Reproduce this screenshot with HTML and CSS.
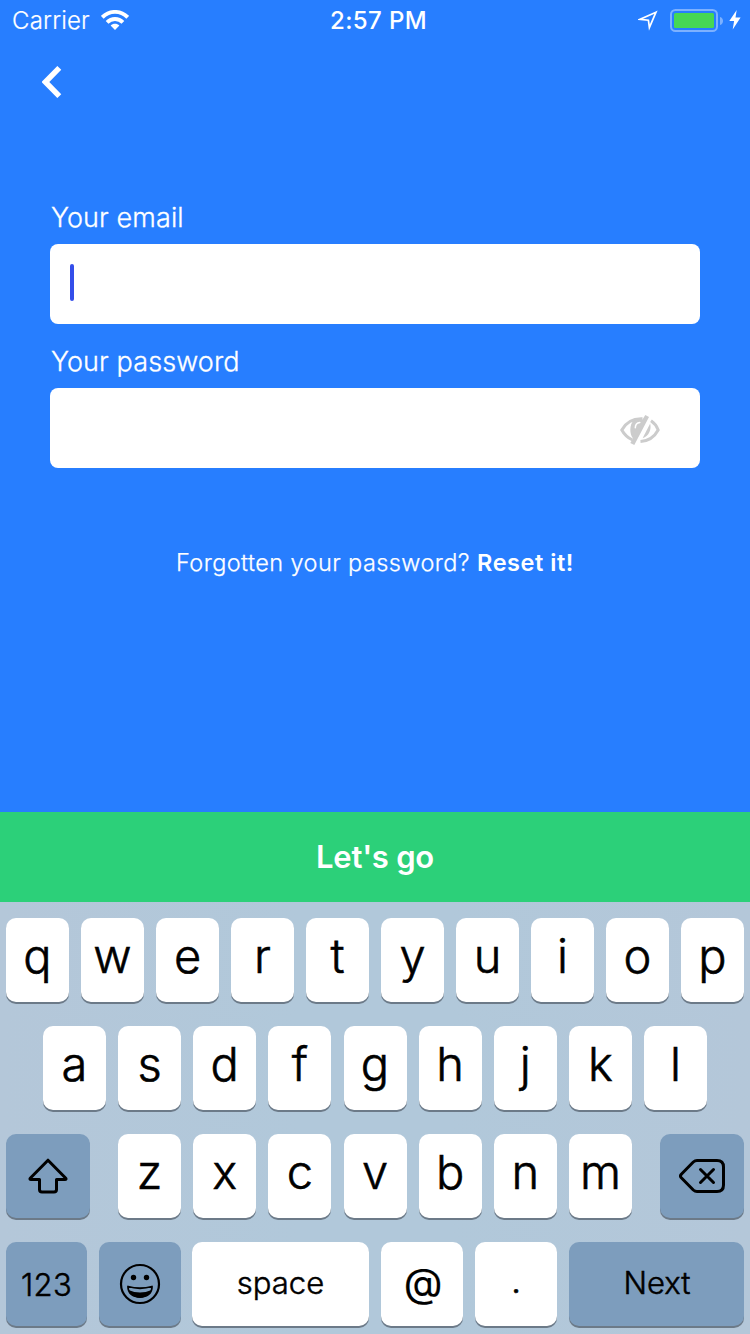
FILE: index.html
```html
<!DOCTYPE html>
<html lang="en">
<head>
<meta charset="utf-8">
<title>Sign in</title>
<link rel="stylesheet" href="styles.css">
</head>
<body>
<main class="screen">
  <header class="status">
    <div class="status-left">
      <span class="carrier">Carrier</span>
      <svg class="wifi" width="28" height="20" viewBox="0 0 28 20"><g fill="none" stroke="#fff" stroke-width="3.9"><path d="M1.3 7.3C8.6 .1 19.4 .1 26.7 7.3"/><path d="M6.1 12.3C10.5 7.9 17.5 7.9 21.9 12.3"/></g><path fill="#fff" d="M9.6 15.5C12 13.2 16 13.2 18.4 15.5L14 20Z"/></svg>
    </div>
    <span class="clock">2:57 PM</span>
    <div class="status-right">
      <svg class="location" width="20" height="21" viewBox="0 0 20 21"><path fill="none" stroke="#fff" stroke-width="1.7" d="M18 2.200L2.200 9.300L10.400 10.200L11.400 17.600Z"/></svg>
      <svg class="battery" width="53" height="24" viewBox="0 0 53 24"><rect x="1" y="1" width="46" height="21" rx="4.5" fill="none" stroke="#fff" stroke-opacity=".4" stroke-width="2"/><rect x="4" y="4" width="40" height="15" rx="1.5" fill="#46d754"/><path fill="#fff" fill-opacity=".4" d="M50 8C54 9 54 15 50 16Z"/></svg>
      <svg class="bolt" width="12" height="20" viewBox="0 0 12 20"><path fill="#fff" d="M7.7 0L.3 11H5.1L3.7 19.5L11.6 7.6H6.5Z"/></svg>
    </div>
  </header>
  <nav class="nav">
    <svg class="back" width="20" height="32" viewBox="0 0 20 32"><path fill="none" stroke="#fff" stroke-width="5.500" d="M17.300 1.900L3.400 16L17.300 30.100"/></svg>
  </nav>
  <form class="form">
    <label class="label">Your email</label>
    <div class="field"><span class="caret"></span></div>
    <label class="label">Your password</label>
    <div class="field field-password">
      <svg class="eye" width="40" height="32" viewBox="0 0 40 32"><g fill="none" stroke="#ccc" stroke-width="3"><path d="M12.5 26C7.800 23.900 4 20 1.800 16C6 8.500 13 4.400 22.500 4.800"/><path d="M31 6.800C34.300 9 36.700 12.100 38.200 16C34.500 22.800 29 27 20.500 27.500"/></g><path fill="#ccc" d="M25.300 1L29 3L14.300 31L10.300 29L13 24.500C9.500 20 9.300 11 13.500 6.500L22.500 5.500Z"/><path fill="none" stroke="#fff" stroke-width="1.500" stroke-linecap="round" d="M15.300 13.800C15.400 10.700 17.400 8.900 19.800 8.600"/><path fill="#ccc" d="M30.200 9.500C31.700 16 28.500 22.300 22.600 24.300Z"/></svg>
    </div>
  </form>
  <p class="forgot">Forgotten your password? <strong class="reset">Reset it!</strong></p>
  <div class="go">Let's go</div>
  <section class="keyboard">
    <div class="row">
      <span class="key">q</span><span class="key">w</span><span class="key">e</span><span class="key">r</span><span class="key">t</span><span class="key">y</span><span class="key">u</span><span class="key">i</span><span class="key">o</span><span class="key">p</span>
    </div>
    <div class="row row-home">
      <span class="key">a</span><span class="key">s</span><span class="key">d</span><span class="key">f</span><span class="key">g</span><span class="key">h</span><span class="key">j</span><span class="key">k</span><span class="key">l</span>
    </div>
    <div class="row">
      <span class="key dark shift"><svg width="40" height="36" viewBox="0 0 40 36"><path fill="none" stroke="#000" stroke-width="3" stroke-linejoin="round" d="M20 2.200L37.800 20.200Q38.600 21.500 37 21.500H28.500V31.500Q28.500 34 26 34H14Q11.500 34 11.500 31.500V21.500H3Q1.400 21.500 2.200 20.200Z"/></svg></span>
      <div class="letters"><span class="key">z</span><span class="key">x</span><span class="key">c</span><span class="key">v</span><span class="key">b</span><span class="key">n</span><span class="key">m</span></div>
      <span class="key dark shift"><svg width="46" height="34" viewBox="0 0 46 34"><path fill="none" stroke="#000" stroke-width="3" stroke-linejoin="round" d="M18 1.500H38Q44.500 1.500 44.500 8V26Q44.500 32.500 38 32.500H18Q16 32.500 14.300 31L2.300 18.800Q.7 17 2.300 15.200L14.300 3Q16 1.500 18 1.500Z"/><path stroke="#000" stroke-width="3" stroke-linecap="round" d="M21.500 10.500L34.500 23.500M34.500 10.500L21.500 23.500"/></svg></span>
    </div>
    <div class="row row-bottom">
      <span class="key dark small numbers">123</span>
      <span class="key dark emoji"><svg width="42" height="42" viewBox="0 0 42 42"><circle cx="21" cy="21" r="19" fill="none" stroke="#000" stroke-width="2.200"/><circle cx="14.500" cy="14.500" r="2.700"/><circle cx="27.500" cy="14.500" r="2.700"/><path fill="none" stroke="#000" stroke-width="1.800" stroke-linejoin="round" d="M9 23.500Q21 27 33 23.500C33 30.500 28 34 21 34S9 30.500 9 23.500Z"/><path d="M9.500 27Q21 32 32.500 27C31 32 27 34.500 21 34.500S11 32 9.500 27Z"/></svg></span>
      <span class="key small space">space</span>
      <span class="key at">@</span>
      <span class="key dot">.</span>
      <span class="key dark small next">Next</span>
    </div>
  </section>
</main>
</body>
</html>
```
FILE: styles.css
```css
* { box-sizing: border-box; }
body { margin: 0; font-family: Inter, "Liberation Sans", sans-serif; }
svg { display: block; flex: none; }
.screen { width: 750px; height: 1334px; overflow: hidden; display: flex; flex-direction: column; background: #277eff; color: #fff; }
.status { height: 40px; display: grid; grid-template-columns: 1fr auto 1fr; padding: 0 9px 0 12px; line-height: 42px; font-size: 24px; }
.status-left { display: flex; align-items: flex-start; }
.carrier { font-weight: 300; letter-spacing: .2px; width: 89px; -webkit-text-stroke: .2px #fff; }
.wifi { margin-top: 10px; }
.clock { font-weight: 500; letter-spacing: .4px; padding-left: 4px; }
.status-right { display: flex; justify-content: flex-end; align-items: flex-start; }
.location { margin: 10px 12px 0 0; }
.battery { margin: 9px 6px 0 0; }
.bolt { margin-top: 10px; }
.nav { height: 151px; padding: 26px 0 0 42px; }
.form { display: flex; flex-direction: column; padding: 0 50px; }
.label { height: 53px; line-height: 53px; padding-left: 1px; font-size: 27px; font-weight: 300; letter-spacing: .1px; -webkit-text-stroke: .3px #fff; }
.field { height: 80px; margin-bottom: 11px; border-radius: 8px; background: #fff; padding: 20px; }
.caret { display: block; width: 4px; height: 37px; border-radius: 2px; background: #344eea; }
.field-password { display: flex; justify-content: flex-end; padding: 26px 40px 0 20px; }
.forgot { margin: 64px 0 0; height: 40px; line-height: 40px; text-align: center; font-size: 23.500px; font-weight: 300; letter-spacing: .42px; -webkit-text-stroke: .25px #fff; }
.reset { font-weight: 600; letter-spacing: .55px; -webkit-text-stroke: 0; }
.go { margin-top: auto; height: 90px; line-height: 90px; text-align: center; background: #2cd079; font-size: 31px; font-weight: 600; letter-spacing: -.25px; }
.keyboard { height: 432px; padding: 16px 6px 0; display: flex; flex-direction: column; gap: 24px; background: linear-gradient(90deg, #b4c7d9, #b1c8da 40%, #b1c8da 60%, #b4c7d9); color: #000; }
.row { display: flex; justify-content: space-between; }
.row-home { padding: 0 37px; }
.letters { width: 514px; margin-left: .15px; display: flex; justify-content: space-between; }
.key { width: 63px; height: 84px; border-radius: 10px; background: #fff; box-shadow: 0 2px 0 #6c7a88; font-size: 47px; font-weight: 300; line-height: 75px; text-align: center; -webkit-text-stroke: .6px #000; }
.dark { background: #7d9dbd; display: flex; align-items: center; justify-content: center; }
.shift { width: 84px; }
.row-bottom { justify-content: flex-start; gap: 12px; }
.row-bottom .key { width: 82px; }
.row-bottom .numbers { width: 81px; padding-top: 2px; letter-spacing: .4px; }
.row-bottom .emoji { margin-right: -1px; }
.row-bottom .space { width: 177px; }
.row-bottom .next { width: 175px; }
.row-bottom .small { font-size: 31px; font-weight: 300; line-height: 82px; -webkit-text-stroke: .5px #000; }
.row-bottom .next { padding-left: 1px; padding-bottom: 2px; }
.row-bottom .at { font-size: 40px; font-weight: 400; line-height: 81px; padding-left: 2px; -webkit-text-stroke: .2px #000; }
.row-bottom .dot { font-size: 36px; font-weight: 300; line-height: 77px; }
```
